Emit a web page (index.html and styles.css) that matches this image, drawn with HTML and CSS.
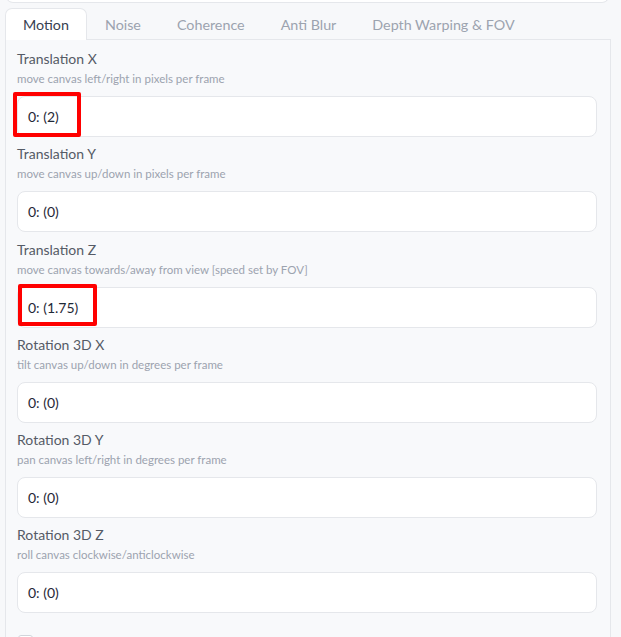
FILE: index.html
```html
<!DOCTYPE html>
<html lang="en">
<head>
<meta charset="utf-8">
<title>Motion settings</title>
<link rel="stylesheet" href="styles.css">
</head>
<body>
<div class="topbox"></div>
<div class="tabs">
  <div class="tab active">Motion</div>
  <div class="tab">Noise</div>
  <div class="tab">Coherence</div>
  <div class="tab">Anti Blur</div>
  <div class="tab">Depth Warping &amp; FOV</div>
</div>
<div class="panel">
  <div class="field">
    <div class="label">Translation X</div>
    <div class="info">move canvas left/right in pixels per frame</div>
    <div class="input">0: (2)</div>
  </div>
  <div class="field">
    <div class="label">Translation Y</div>
    <div class="info">move canvas up/down in pixels per frame</div>
    <div class="input">0: (0)</div>
  </div>
  <div class="field">
    <div class="label">Translation Z</div>
    <div class="info">move canvas towards/away from view [speed set by FOV]</div>
    <div class="input">0: (1.75)</div>
  </div>
  <div class="field">
    <div class="label">Rotation 3D X</div>
    <div class="info">tilt canvas up/down in degrees per frame</div>
    <div class="input">0: (0)</div>
  </div>
  <div class="field">
    <div class="label">Rotation 3D Y</div>
    <div class="info">pan canvas left/right in degrees per frame</div>
    <div class="input">0: (0)</div>
  </div>
  <div class="field">
    <div class="label">Rotation 3D Z</div>
    <div class="info">roll canvas clockwise/anticlockwise</div>
    <div class="input">0: (0)</div>
  </div>
  <div class="check"><span class="box"></span></div>
</div>
<div class="mark mark1"></div>
<div class="mark mark2"></div>
</body>
</html>
```
FILE: styles.css
```css
* { box-sizing: border-box; }
html, body {
  margin: 0;
  padding: 0;
  background: #f7f8fa;
  font-family: "Lato", "Liberation Sans", sans-serif;
  overflow: hidden;
}
body { position: relative; height: 637px; }
.topbox {
  margin: -6px 12px 0 6px;
  height: 9px;
  background: #ffffff;
  border: 1px solid #e5e7eb;
  border-top: none;
  border-radius: 0 0 7px 7px;
}
.tabs {
  display: flex;
  margin: 5px 0 0 5px;
  height: 32px;
  position: relative;
  z-index: 1;
}
.tab {
  padding: 0 17px;
  font-size: 14.3px;
  line-height: 31px;
  color: #9ca3af;
  border: 1px solid transparent;
  border-bottom: none;
  border-radius: 7px 7px 0 0;
}
.tab.active {
  background: #ffffff;
  border-color: #e5e7eb;
  color: #374151;
  height: 32px;
}
.panel {
  margin: -1px 10px 0 5px;
  border: 1px solid #e5e7eb;
  border-bottom: none;
  padding: 9px 13px 0 11px;
  background: #f8f9fb;
  height: 600px;
}
.field { margin-bottom: 7.3px; }
.label {
  font-size: 14px;
  line-height: 20px;
  color: #555b66;
}
.info {
  font-size: 11.5px;
  line-height: 16px;
  color: #9ca3af;
  margin-top: 2px;
  margin-bottom: 9px;
}
.input {
  height: 41px;
  background: #ffffff;
  border: 1px solid #e5e7eb;
  border-radius: 8px;
  padding: 0 10px;
  font-size: 14px;
  line-height: 39px;
  color: #1f2937;
}
.check { padding: 14px 0 0 1px; }
.box {
  display: block;
  width: 15px;
  height: 15px;
  border: 1px solid #d1d5db;
  border-radius: 3px;
  background: #ffffff;
}
.mark {
  position: absolute;
  border: 4px solid #ff0000;
  border-radius: 2px;
}
.mark1 { left: 13px; top: 92px; width: 68px; height: 45px; }
.mark2 { left: 18px; top: 284px; width: 79px; height: 42px; }
```
